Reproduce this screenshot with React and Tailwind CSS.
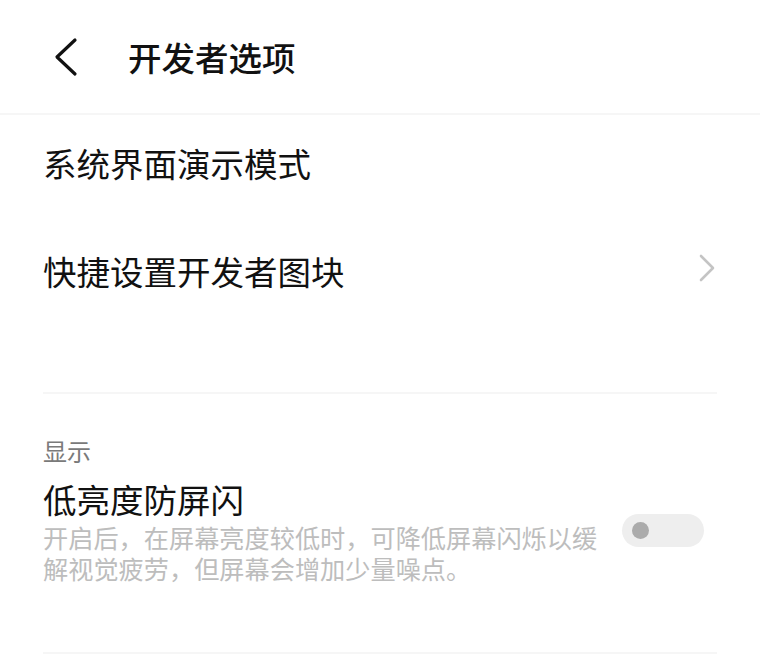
const cjk = { fontFamily: '"Noto Sans CJK SC", "Noto Sans", sans-serif' };

function BackIcon() {
  return (
    <svg width="26" height="40" viewBox="0 0 26 40" fill="none">
      <path d="M22 3 L4 20 L22 37" stroke="#111" strokeWidth="3.2" strokeLinecap="round" strokeLinejoin="round" />
    </svg>
  );
}

function ChevronRight() {
  return (
    <svg width="18" height="30" viewBox="0 0 18 30" fill="none">
      <path d="M3 3 L15 15 L3 27" stroke="#c4c4c4" strokeWidth="2.6" strokeLinecap="round" strokeLinejoin="round" />
    </svg>
  );
}

export default function App() {
  return (
    <div className="w-[760px] h-[659px] overflow-hidden bg-white text-[#111]" style={cjk}>
      <header className="flex h-[115px] items-center border-b-2 border-[#f6f6f6] pl-[53px]">
        <BackIcon />
        <h1 className="ml-[49px] text-[33.5px] font-medium leading-none">开发者选项</h1>
      </header>

      <div className="px-[43px]">
        <div className="flex h-[94px] items-end pb-[30px]">
          <span className="text-[33.5px] leading-none">系统界面演示模式</span>
        </div>
        <div className="flex h-[124px] items-start justify-between pt-[45px]">
          <span className="text-[33.5px] leading-none">快捷设置开发者图块</span>
          <div className="mr-[1px] -mt-[1px]">
            <ChevronRight />
          </div>
        </div>

        <div className="mt-[59px] h-[2px] bg-[#f6f6f6]" />

        <div className="pt-[45px]">
          <div className="text-[24px] leading-none text-[#7a7a7a]">显示</div>
          <div className="mt-[19px] text-[33.5px] leading-[34px]">低亮度防屏闪</div>
          <div className="mt-[6px] flex items-start justify-between">
            <p className="w-[565px] text-[25.2px] leading-[31px] text-[#bdbdbd]">
              开启后，在屏幕亮度较低时，可降低屏幕闪烁以缓解视觉疲劳，但屏幕会增加少量噪点。
            </p>
            <div className="mr-[13px] -mt-[8px] flex h-[33px] w-[82px] items-center rounded-full bg-[#eeeeee] pl-[10px]">
              <div className="h-[17px] w-[17px] rounded-full bg-[#ababab]" />
            </div>
          </div>
        </div>

        <div className="mt-[68px] h-[2px] bg-[#f6f6f6]" />
      </div>
    </div>
  );
}
